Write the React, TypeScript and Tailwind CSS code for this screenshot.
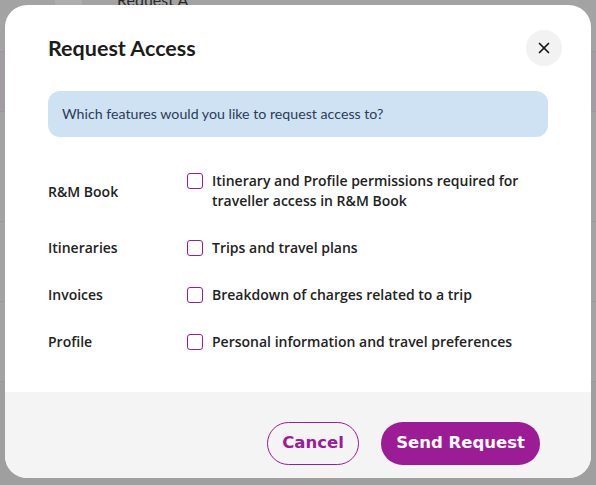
import { X } from "lucide-react";

const rows = [
  {
    label: "R&M Book",
    text: "Itinerary and Profile permissions required for traveller access in R&M Book",
  },
  { label: "Itineraries", text: "Trips and travel plans" },
  { label: "Invoices", text: "Breakdown of charges related to a trip" },
  { label: "Profile", text: "Personal information and travel preferences" },
];

function Backdrop() {
  // dimmed page behind the dialog
  return (
    <div className="flex h-[485px] w-[596px] flex-col bg-[#a3a3a3]">
      <div className="flex h-[52px] border-b border-[#999]">
        <div className="ml-[55px] h-[8px] w-[27px] bg-[#adadad]" />
        <span className="-mt-[10px] ml-[35px] text-[16px] leading-[20px] text-[#2a2a2a]">Request A</span>
      </div>
      <div className="h-[60px] border-b border-[#999] bg-[#a39ca2]" />
      <div className="h-[110px] border-b border-[#999]" />
      <div className="h-[80px] border-b border-[#999]" />
      <div className="h-[80px] border-b border-[#999]" />
      <div className="flex-1 bg-[#9f9f9f]" />
    </div>
  );
}

export default function App() {
  return (
    <div className="relative h-[485px] w-[596px] overflow-hidden" style={{ fontFamily: "Lato, sans-serif" }}>
      <Backdrop />

      <div className="absolute left-[5px] top-[5px] flex h-[473px] w-[586px] flex-col overflow-hidden rounded-[22px] bg-white">
        <div className="flex items-center justify-between pl-[43px] pr-[29px] pt-[25px]">
          <h1 className="text-[21.5px] font-bold leading-[36px] text-[#1c1c1c]">Request Access</h1>
          <button className="flex h-[36px] w-[36px] items-center justify-center rounded-full bg-[#f2f2f2] text-[#111]">
            <X size={18} strokeWidth={2.2} />
          </button>
        </div>

        <div className="mx-[43px] mt-[25px] flex h-[46px] items-center rounded-[12px] bg-[#cfe2f3] px-[14px] text-[14.2px] text-[#2c3b57]">
          Which features would you like to request access to?
        </div>

        <div
          className="mt-[34px] flex flex-col gap-[26px] px-[43px]"
          style={{ fontFamily: "'Open Sans', sans-serif" }}
        >
          {rows.map((r) => (
            <div key={r.label} className="flex items-center">
              <div className="w-[139px] text-[14px] font-semibold text-[#222]">{r.label}</div>
              <div className="flex flex-1 items-start gap-[9px] pr-[8px]">
                <span className="mt-[2px] h-[16px] w-[16px] shrink-0 rounded-[3px] border border-[#9c1c96] bg-white" />
                <span className="text-[14px] font-semibold leading-[20px] text-[#222]">{r.text}</span>
              </div>
            </div>
          ))}
        </div>

        <div className="mt-auto flex h-[86px] items-start justify-end gap-[22px] bg-[#f4f4f4] pr-[51px] pt-[30px]">
          <button
            className="h-[43px] w-[92px] rounded-full border border-[#9c1c96] text-[16.5px] font-bold text-[#9c1c96]"
            style={{ fontFamily: "'DejaVu Sans', sans-serif" }}
          >
            Cancel
          </button>
          <button
            className="h-[43px] w-[159px] rounded-full bg-[#9c1c96] text-[16.5px] font-bold text-white"
            style={{ fontFamily: "'DejaVu Sans', sans-serif" }}
          >
            Send Request
          </button>
        </div>
      </div>
    </div>
  );
}
